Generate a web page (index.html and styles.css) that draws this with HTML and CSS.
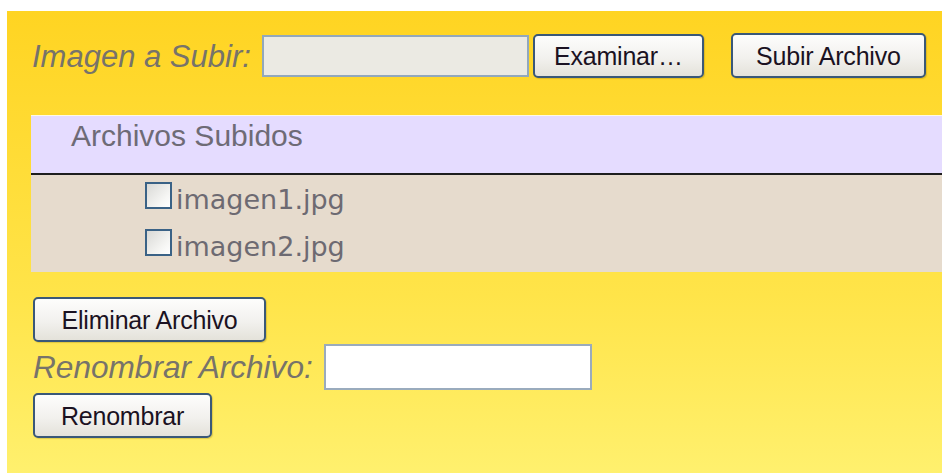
FILE: index.html
```html
<!DOCTYPE html>
<html lang="es">
<head>
<meta charset="utf-8">
<title>Subir Archivos</title>
<link rel="stylesheet" href="styles.css">
</head>
<body>
<form class="panel">
  <div class="upload-row">
    <label class="field-label" for="archivo">Imagen a Subir:</label>
    <span class="file-box" id="archivo"></span>
    <button type="button" class="btn btn-browse">Examinar…</button>
    <button type="button" class="btn btn-upload">Subir Archivo</button>
  </div>

  <section class="files">
    <h2 class="files-title">Archivos Subidos</h2>
    <ul class="file-list">
      <li class="file-item"><span class="cb"></span>imagen1.jpg</li>
      <li class="file-item"><span class="cb"></span>imagen2.jpg</li>
    </ul>
  </section>

  <div class="actions">
    <button type="button" class="btn">Eliminar Archivo</button>
    <div class="rename-row">
      <label class="field-label rename-label" for="nuevo">Renombrar Archivo:</label>
      <input class="text-box" id="nuevo" type="text">
    </div>
    <button type="button" class="btn btn-rename">Renombrar</button>
  </div>
</form>
</body>
</html>
```

FILE: styles.css
```css
html, body {
  height: 100%;
}

body {
  margin: 11px 0 0 7px;
  background: #ffffff;
  overflow: hidden;
}

.panel {
  box-sizing: border-box;
  min-height: 100%;
  padding: 22px 0 0 24px;
  background: linear-gradient(#ffd422, #ffe449 60%, #fff170);
  font-family: "Liberation Sans", Arial, sans-serif;
}

/* ---- shared controls ---- */
.field-label {
  font-size: 31px;
  font-style: italic;
  color: #77736a;
  white-space: nowrap;
}

.btn {
  box-sizing: border-box;
  height: 45px;
  padding: 2px 0 0;
  border: 2px solid #3a5878;
  border-radius: 5px;
  background: linear-gradient(#fdfdfc, #f2f1ee 55%, #e4e2da);
  box-shadow: 1px 1px 1px rgba(120, 100, 0, 0.25);
  font-family: "Liberation Sans", Arial, sans-serif;
  font-size: 25px;
  letter-spacing: -0.2px;
  color: #1b1222;
  white-space: nowrap;
  cursor: pointer;
}

/* ---- upload row ---- */
.upload-row {
  display: flex;
  align-items: center;
  height: 45px;
}

.upload-row .field-label {
  margin-left: 1px;
  padding-top: 2px;
}

.file-box {
  box-sizing: border-box;
  width: 267px;
  height: 42px;
  margin-left: 11px;
  border: 2px solid #92a8bc;
  background: #ebeae3;
}

.btn-browse {
  margin-left: 4px;
  width: 171px;
  height: 44px;
}

.btn-upload {
  margin-left: 27px;
  width: 195px;
}

/* ---- uploaded files ---- */
.files {
  margin-top: 37px;
}

.files-title {
  box-sizing: border-box;
  height: 60px;
  margin: 0;
  padding: 3px 0 0 40px;
  border-top: 1px solid #fffbe2;
  border-bottom: 2px solid #1e1e1e;
  background: #e5dcff;
  font-size: 30px;
  font-weight: normal;
  color: #6e6b76;
}

.file-list {
  margin: 0;
  padding: 1px 0 2px 114px;
  list-style: none;
  background: #e6dbcd;
}

.file-item {
  line-height: 47px;
  font-family: "DejaVu Sans", sans-serif;
  font-size: 27px;
  color: #6d6a72;
}

.cb {
  display: inline-block;
  box-sizing: border-box;
  width: 27px;
  height: 27px;
  margin-right: 4px;
  border: 2px solid #3a6286;
  background: linear-gradient(135deg, #d9d9d6, #f6f6f4 70%, #ffffff);
}

/* ---- actions below the list ---- */
.actions {
  display: flex;
  flex-direction: column;
  align-items: flex-start;
  padding-top: 25px;
  margin-left: 2px;
}

.actions > .btn {
  width: 233px;
}

.rename-row {
  display: flex;
  align-items: center;
  margin-top: 2px;
}

.rename-label {
  width: 282px;
  font-size: 31.6px;
}

.text-box {
  box-sizing: border-box;
  width: 268px;
  height: 46px;
  margin: 0 0 0 9px;
  border: 2px solid #9aabbd;
  background: #ffffff;
  outline: none;
}

.actions > .btn-rename {
  margin-top: 3px;
  width: 179px;
}
```
